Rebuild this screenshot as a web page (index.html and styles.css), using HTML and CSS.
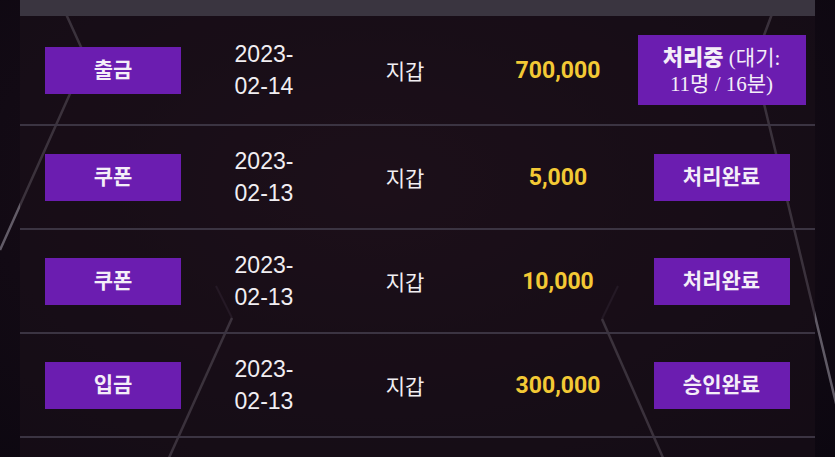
FILE: index.html
```html
<!DOCTYPE html>
<html lang="ko">
<head>
    <meta charset="UTF-8">
    <meta name="viewport" content="width=device-width, initial-scale=1.0">
    <title>입출금 내역</title>
    <link rel="stylesheet" href="styles.css">
</head>
<body>
    <div class="page">
        <svg class="bg-lines" width="835" height="457" viewBox="0 0 835 457">
            <polyline points="66,14 86,58 0,250" />
            <polyline points="772,14 754,62 840,420" />
            <polyline class="faint" points="216,286 232,318" />
            <polyline points="232,318 168,460" />
            <polyline class="faint" points="618,286 602,319" />
            <polyline points="602,319 664,460" />
        </svg>

        <div class="history">
            <div class="history-head"></div>

            <div class="history-row">
                <div class="cell"><span class="tipo">출금</span></div>
                <div class="cell fecha">2023-<br>02-14</div>
                <div class="cell">지갑</div>
                <div class="cell monto">700,000</div>
                <div class="cell">
                    <span class="estado estado-largo"><b>처리중</b> <span class="espera">(대기:<br>11명 / 16분)</span></span>
                </div>
            </div>

            <div class="history-row">
                <div class="cell"><span class="tipo">쿠폰</span></div>
                <div class="cell fecha">2023-<br>02-13</div>
                <div class="cell">지갑</div>
                <div class="cell monto">5,000</div>
                <div class="cell"><span class="estado">처리완료</span></div>
            </div>

            <div class="history-row">
                <div class="cell"><span class="tipo">쿠폰</span></div>
                <div class="cell fecha">2023-<br>02-13</div>
                <div class="cell">지갑</div>
                <div class="cell monto">10,000</div>
                <div class="cell"><span class="estado">처리완료</span></div>
            </div>

            <div class="history-row">
                <div class="cell"><span class="tipo">입금</span></div>
                <div class="cell fecha">2023-<br>02-13</div>
                <div class="cell">지갑</div>
                <div class="cell monto">300,000</div>
                <div class="cell"><span class="estado">승인완료</span></div>
            </div>

            <div class="history-row"></div>
        </div>
    </div>
</body>
</html>
```

FILE: styles.css
```css
body {
    margin: 0;
    padding: 0;
    background-color: #0c0710;
    font-family: Roboto, "Noto Sans CJK KR", sans-serif;
    color: #f1eef2;
    overflow: hidden;
}

.page {
    position: relative;
    height: 457px;
    overflow: hidden;
    background: radial-gradient(ellipse at 45% 40%, #1e0f1a 0%, #120a14 60%, #0c0710 100%);
}

.bg-lines {
    position: absolute;
    top: 0;
    left: 0;
}

    .bg-lines polyline {
        fill: none;
        stroke: rgba(195, 190, 205, 0.45);
        stroke-width: 2.5;
    }

        .bg-lines polyline.faint {
            stroke: rgba(170, 150, 190, 0.18);
            stroke-width: 2;
        }

.history {
    position: relative;
    margin: 0 20px;
    background-color: rgba(28, 16, 26, 0.55);
}

.history-head {
    height: 16px;
    background-color: #3a3540;
}

.history-row {
    display: grid;
    grid-template-columns: 186px 116px 166px 140px 1fr;
    align-items: center;
    box-sizing: border-box;
    min-height: 104px;
    padding: 19px 0;
    border-bottom: 2px solid #3b3442;
    font-size: 21px;
}

.cell {
    text-align: center;
}

.tipo,
.estado {
    display: inline-block;
    width: 136px;
    height: 47px;
    line-height: 47px;
    background-color: #6b1db0;
    color: #f4eef8;
    font-weight: bold;
    font-size: 21px;
}

.fecha {
    font-family: "Liberation Sans", "Noto Sans CJK KR", sans-serif;
    font-size: 23px;
    line-height: 32px;
}

.monto {
    color: #f3c935;
    font-weight: bold;
    font-size: 23px;
}

.estado-largo {
    width: 168px;
    height: 70px;
    line-height: 25px;
    padding-top: 10px;
    box-sizing: border-box;
    font-size: 22px;
}

.espera {
    font-family: "Liberation Serif", "Noto Sans CJK KR", serif;
    font-weight: normal;
    font-size: 21px;
}
```
